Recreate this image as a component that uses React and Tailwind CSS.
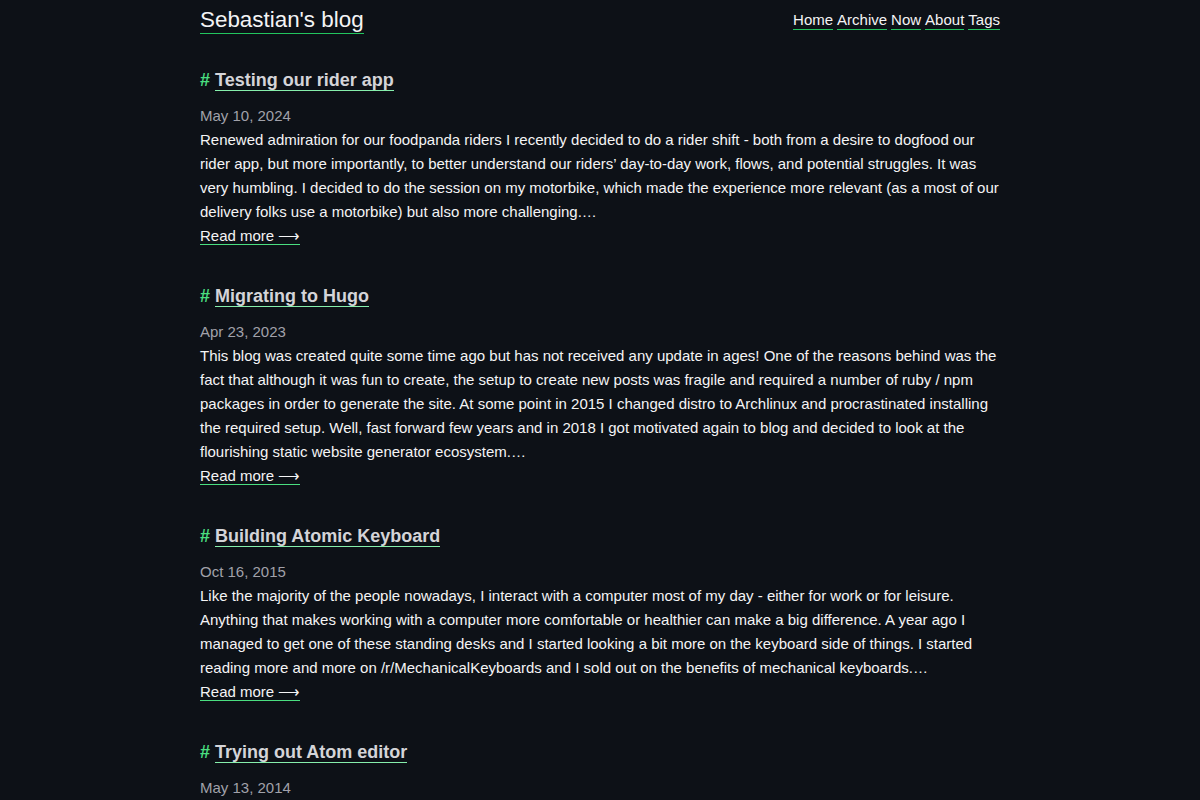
const posts = [
  {
    title: 'Testing our rider app',
    date: 'May 10, 2024',
    summary:
      "Renewed admiration for our foodpanda riders I recently decided to do a rider shift - both from a desire to dogfood our rider app, but more importantly, to better understand our riders’ day-to-day work, flows, and potential struggles. It was very humbling. I decided to do the session on my motorbike, which made the experience more relevant (as a most of our delivery folks use a motorbike) but also more challenging.…",
  },
  {
    title: 'Migrating to Hugo',
    date: 'Apr 23, 2023',
    summary:
      'This blog was created quite some time ago but has not received any update in ages! One of the reasons behind was the fact that although it was fun to create, the setup to create new posts was fragile and required a number of ruby / npm packages in order to generate the site. At some point in 2015 I changed distro to Archlinux and procrastinated installing the required setup. Well, fast forward few years and in 2018 I got motivated again to blog and decided to look at the flourishing static website generator ecosystem.…',
  },
  {
    title: 'Building Atomic Keyboard',
    date: 'Oct 16, 2015',
    summary:
      'Like the majority of the people nowadays, I interact with a computer most of my day - either for work or for leisure. Anything that makes working with a computer more comfortable or healthier can make a big difference. A year ago I managed to get one of these standing desks and I started looking a bit more on the keyboard side of things. I started reading more and more on /r/MechanicalKeyboards and I sold out on the benefits of mechanical keyboards.…',
  },
  {
    title: 'Trying out Atom editor',
    date: 'May 13, 2014',
    summary: '',
  },
];

const nav = ['Home', 'Archive', 'Now', 'About', 'Tags'];

function Post({ title, date, summary }) {
  return (
    <article className="mb-[33px]">
      <h2 className="text-[18px] leading-[30px] font-bold text-[#d4d4d8]">
        <span className="text-[#4ade80]"># </span>
        <a href="#" className="border-b border-[#86efac]">{title}</a>
      </h2>
      <div className="mt-[9px] text-[15px] leading-[24px] text-[#a1a1aa]">{date}</div>
      {summary && (
        <>
          <p className="text-[15px] leading-[24px] text-[#f4f4f5]">{summary}</p>
          <a href="#" className="text-[15px] leading-[24px] text-[#f4f4f5] border-b border-[#4ade80]">
            Read more ⟶
          </a>
        </>
      )}
    </article>
  );
}

export default function App() {
  return (
    <div className="min-h-screen bg-[#0d1117] font-['Liberation_Sans',Arial,sans-serif]">
      <div className="mx-auto w-[800px]">
        <header className="h-[40px] flex items-center justify-between">
          <a href="#" className="text-[22.4px] leading-[26px] text-[#f4f4f5] border-b border-[#22c55e]">
            Sebastian's blog
          </a>
          <nav className="flex gap-[4px] text-[15px] leading-[18px] text-[#f4f4f5]">
            {nav.map((item) => (
              <a key={item} href="#" className="border-b border-[#22c55e]">{item}</a>
            ))}
          </nav>
        </header>
        <main className="pt-[25px]">
          {posts.map((p) => (
            <Post key={p.title} {...p} />
          ))}
        </main>
      </div>
    </div>
  );
}
